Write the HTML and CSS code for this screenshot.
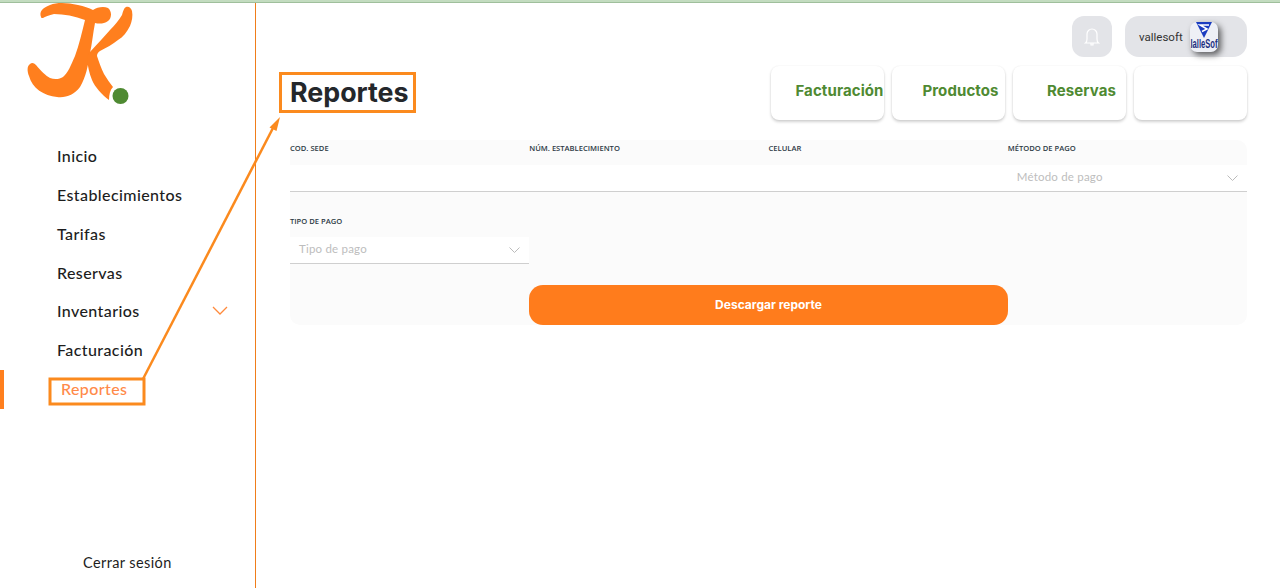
FILE: index.html
```html
<!DOCTYPE html>
<html>
<head>
  <meta charset="utf-8">
  <link rel="stylesheet" href="styles.css">
</head>
<body>
<div class="top-line"></div>
<div class="layout">
  <aside class="sidebar">
    <div class="logo">
      <svg width="140" height="133" viewBox="0 2 140 133">
        <path fill="#ff7f1e" d="M41 17C39 12 42 8 50 5C58 2 68 3 78 5C84 6 89 8 93 10C97 7 104 6 108 8C112 11 112 18 108 21C104 24 99 24 95 23C93 33 92 44 90 53C88 66 86 77 80 87C74 95 66 98 57 97C44 96 32 88 29 76C27 71 27 66 30 64C32 62 34 63 36 65C41 71 46 76 50 78C55 80 60 79 63 77C68 73 71 65 75 56C79 45 82 32 85 20C75 16 64 14 54 14C49 15 45 17 43 18C42 18 41 18 41 17Z"/>
        <path fill="#ff7f1e" d="M90 52C97 44 104 37 110 30C115 25 119 20 122 15C123 11 124 8 126 7C129 6 131 8 132 11C133 16 132 21 130 26C127 32 123 37 118 40C113 44 106 48 100 51C98 52 97 54 97 56C99 62 101 68 104 74C107 79 110 83 113 87C110 90 109 95 109 100C102 95 95 87 92 80C89 73 88 66 87 60C87 56 88 54 90 52Z"/>
        <circle cx="120.500" cy="96" r="8" fill="#4f8a32"/>
      </svg>
    </div>
    <nav class="nav">
      <a class="nav-item">Inicio</a>
      <a class="nav-item">Establecimientos</a>
      <a class="nav-item">Tarifas</a>
      <a class="nav-item">Reservas</a>
      <a class="nav-item">Inventarios
        <svg class="nav-chevron" width="16" height="9" viewBox="0 0 16 9"><path d="M1 1l7 7 7-7" fill="none" stroke="#ff8a3c" stroke-width="1.300"/></svg>
      </a>
      <a class="nav-item">Facturación</a>
      <a class="nav-item active">Reportes</a>
    </nav>
    <a class="logout">Cerrar sesión</a>
  </aside>

  <main class="content">
    <div class="user-bar">
      <div class="bell">
        <svg width="16" height="20" viewBox="0 0 16 20"><path d="M1.500 16c1-.7 1.500-2 1.500-4V7a5 5 0 0 1 10 0v5c0 2 .5 3.300 1.500 4zM7 16.500v1.500h2v-1.500" fill="none" stroke="#fff" stroke-width="1.200"/></svg>
      </div>
      <div class="user-chip">
        <span class="user-name">vallesoft</span>
        <div class="avatar">
          <svg width="28" height="30" viewBox="0 0 28 30">
            <path d="M6 0h16l-8 16z" fill="#1a3cc0"/>
            <path d="M19 3H10l7 4-5 2.500" fill="none" stroke="#fff" stroke-width="1.500"/>
            <text x="0.500" y="26" textLength="27" lengthAdjust="spacingAndGlyphs" class="avatar-text">lalleSof</text>
          </svg>
        </div>
      </div>
    </div>

    <div class="title-row">
      <h1 class="title">Reportes</h1>
      <div class="tabs">
        <a class="tab">Facturación</a>
        <a class="tab">Productos</a>
        <a class="tab">Reservas</a>
        <a class="tab"></a>
      </div>
    </div>

    <form class="panel">
      <div class="field">
        <label>COD. SEDE</label>
        <div class="input"></div>
      </div>
      <div class="field">
        <label>NÚM. ESTABLECIMIENTO</label>
        <div class="input"></div>
      </div>
      <div class="field">
        <label>CELULAR</label>
        <div class="input"></div>
      </div>
      <div class="field">
        <label>MÉTODO DE PAGO</label>
        <div class="input select">
          <span>Método de pago</span>
          <svg width="11" height="7" viewBox="0 0 11 7"><path d="M.5.500l5 5 5-5" fill="none" stroke="#bbb"/></svg>
        </div>
      </div>
      <div class="field field-second">
        <label>TIPO DE PAGO</label>
        <div class="input select">
          <span>Tipo de pago</span>
          <svg width="11" height="7" viewBox="0 0 11 7"><path d="M.5.500l5 5 5-5" fill="none" stroke="#bbb"/></svg>
        </div>
      </div>
      <button type="button" class="download">Descargar reporte</button>
    </form>
  </main>
</div>

<!-- anotaciones encima de la captura -->
<svg class="notes" width="1280" height="588" viewBox="0 0 1280 588">
  <g fill="none" stroke="#fb8a1e" stroke-width="3">
    <rect x="280.500" y="73.500" width="134" height="38"/>
    <rect x="50" y="379" width="94" height="25"/>
    <path d="M143 379L273 128" stroke-width="2.500"/>
  </g>
  <path d="M280 117L276.500 131 269.500 127.500z" fill="#fb8a1e"/>
</svg>
</body>
</html>
```

FILE: styles.css
```css
* {
  box-sizing: border-box;
}

body {
  margin: 0;
  height: 588px;
  overflow: hidden;
  background-color: #ffffff;
  font-family: "Lato", sans-serif;
  color: #222222;
}

.top-line {
  height: 3px;
  background-color: #c3dcc0;
  border-bottom: 1px solid #9fbf9c;
}

.layout {
  display: flex;
  height: 585px;
}

.sidebar {
  width: 256px;
  flex-shrink: 0;
  display: flex;
  flex-direction: column;
  border-right: 1px solid #f07d1a;
}

.logo {
  height: 134px;
  margin-top: -1px;
}

.logo svg {
  display: block;
}

.nav {
  display: flex;
  flex-direction: column;
  margin-top: 0.300px;
}

.nav-item {
  height: 38.800px;
  padding-left: 57px;
  padding-right: 27px;
  display: flex;
  align-items: center;
  justify-content: space-between;
  font-size: 16px;
  font-weight: 500;
  letter-spacing: 0.4px;
  color: #1d1d1d;
}

.nav-item.active {
  margin-top: 1px;
  padding-bottom: 1.500px;
  color: #ff8a4a;
  border-left: 4px solid #ff7f1e;
}

.nav-chevron {
  flex-shrink: 0;
}

.logout {
  margin-top: auto;
  margin-bottom: 17px;
  padding-left: 83px;
  font-size: 14.500px;
  letter-spacing: 0.4px;
  color: #1d1d1d;
}

.content {
  flex: 1;
  padding: 13px 33px 0 34px;
}

.user-bar {
  display: flex;
  justify-content: flex-end;
  gap: 13px;
  height: 41px;
}

.bell {
  width: 40px;
  height: 41px;
  border-radius: 12px;
  background-color: #e3e4e8;
  display: flex;
  align-items: center;
  justify-content: center;
}

.user-chip {
  width: 122px;
  height: 41px;
  border-radius: 14px;
  background-color: #e3e4e8;
  display: flex;
  align-items: center;
  padding-left: 14px;
  gap: 7px;
}

.user-name {
  font-family: "Roboto", sans-serif;
  font-size: 11.500px;
  color: #333333;
}

.avatar {
  width: 28px;
  height: 30px;
  border-radius: 7px;
  background-color: #eef0f6;
  box-shadow: 3px 3px 6px rgba(0, 0, 0, 0.6);
}

.avatar svg {
  display: block;
  overflow: visible;
}

.avatar-text {
  font-family: "Liberation Sans", sans-serif;
  font-size: 12px;
  font-weight: 700;
  fill: #1c2f80;
}

.title-row {
  display: flex;
  justify-content: space-between;
  margin-top: 9px;
}

.title {
  margin: 0;
  padding-top: 7.500px;
  font-family: "Inter", sans-serif;
  font-size: 26.800px;
  font-weight: 700;
  line-height: 36px;
  color: #24272b;
}

.tabs {
  display: flex;
  gap: 8px;
}

.tab {
  width: 113px;
  height: 54px;
  padding-left: 24px;
  padding-bottom: 5px;
  border-radius: 8px;
  background-color: #ffffff;
  box-shadow: 0 2px 3px rgba(0, 0, 0, 0.18), 0 0 2px rgba(0, 0, 0, 0.07);
  display: flex;
  align-items: center;
  justify-content: center;
  font-family: "Inter", sans-serif;
  font-size: 15px;
  font-weight: 700;
  letter-spacing: 0.1px;
  white-space: nowrap;
  color: #4f8a32;
}

.panel {
  margin-top: 20px;
  height: 185px;
  border-radius: 10px;
  background-color: #fbfbfb;
  display: grid;
  grid-template-columns: repeat(4, 1fr);
  grid-template-rows: 52px 93px 40px;
}

.field label {
  display: block;
  height: 25px;
  padding-top: 2.500px;
  font-family: "Open Sans", sans-serif;
  font-size: 7.600px;
  font-weight: 600;
  line-height: 10px;
  color: #2d3a45;
}

.field-second {
  grid-column: 1;
  padding-top: 21px;
}

.field-second label {
  height: 24px;
}

.input {
  height: 27px;
  background-color: #ffffff;
  border-bottom: 1px solid #cfcfcf;
}

.select {
  display: flex;
  align-items: center;
  justify-content: space-between;
  padding: 0 9px;
  font-size: 11.500px;
  letter-spacing: 0.2px;
  color: #bdbdbd;
}

.select span {
  margin-bottom: 4px;
}

.download {
  grid-column: 2 / 4;
  grid-row: 3;
  padding-bottom: 3px;
  border: none;
  border-radius: 14px;
  background-color: #ff7c1c;
  font-family: "Inter", sans-serif;
  font-size: 12px;
  font-weight: 700;
  color: #ffffff;
}

.notes {
  position: absolute;
  top: 0;
  left: 0;
  pointer-events: none;
}
```
